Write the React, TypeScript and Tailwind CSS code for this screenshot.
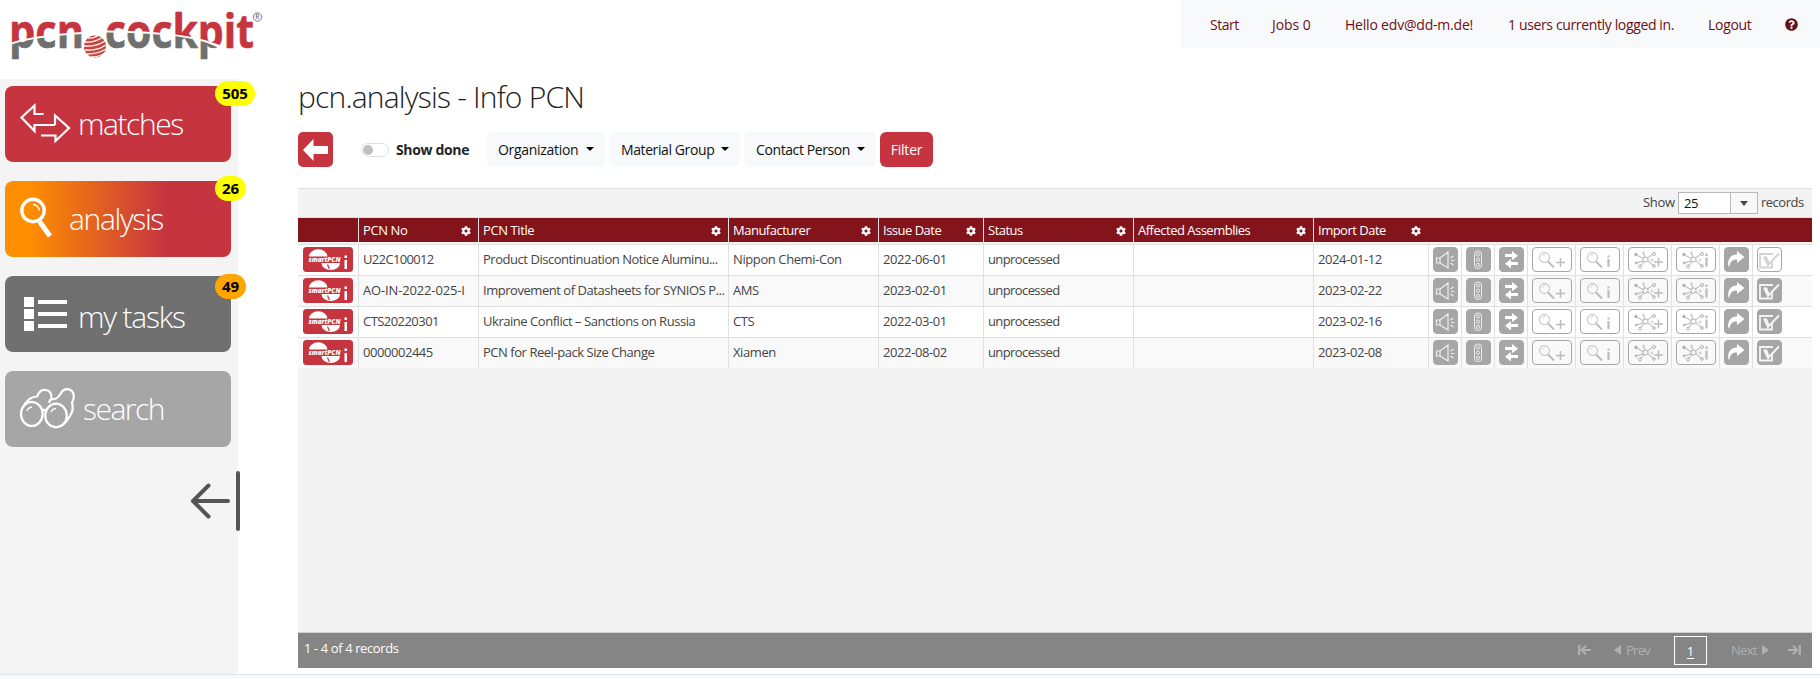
import type { ReactNode } from "react";
import { FaCog, FaQuestionCircle } from "react-icons/fa";
import clsx from "clsx";

const records = [
  { no: "U22C100012", noClass: "tracking-[-0.65px]", title: "Product Discontinuation Notice Aluminu...", maker: "Nippon Chemi-Con", issued: "2022-06-01", imported: "2024-01-12", done: false },
  { no: "AO-IN-2022-025-I", noClass: "tracking-[-0.15px]", title: "Improvement of Datasheets for SYNIOS P...", maker: "AMS", issued: "2023-02-01", imported: "2023-02-22", done: true },
  { no: "CTS20220301", noClass: "tracking-[-0.55px]", title: "Ukraine Conflict – Sanctions on Russia", maker: "CTS", issued: "2022-03-01", imported: "2023-02-16", done: true },
  { no: "0000002445", noClass: "tracking-[-0.45px]", title: "PCN for Reel-pack Size Change", maker: "Xiamen", issued: "2022-08-02", imported: "2023-02-08", done: true },
];

const headers = [
  { label: "PCN No", width: "w-[120px]", text: "tracking-[-0.4px]" },
  { label: "PCN Title", width: "w-[250px]", text: "tracking-[-0.4px]" },
  { label: "Manufacturer", width: "w-[150px]", text: "tracking-[-0.5px]" },
  { label: "Issue Date", width: "w-[105px]", text: "tracking-[-0.5px]" },
  { label: "Status", width: "w-[150px]", text: "tracking-[-0.5px]" },
  { label: "Affected Assemblies", width: "w-[180px]", text: "tracking-[-0.5px]" },
  { label: "Import Date", width: "w-[115px]", text: "tracking-[-0.5px]" },
];

function Logo() {
  return (
    <svg width="270" height="79" viewBox="0 0 270 79" className="block shrink-0" fontFamily="Open Sans, sans-serif">
      <defs>
        <pattern id="twoTone" patternUnits="userSpaceOnUse" width="270" height="79">
          <path d="M0 0H270V79H228V49C212 40 180 31 107 30.500V0H90V31.500C60 33 30 36 10 43H0Z" fill="#c6343f" />
          <path d="M0 46L10 45C30 38 60 35 90 33.500V79H0ZM104 32.500C180 33 205 40 223 50V79H104Z" fill="#6f6f6e" />
        </pattern>
      </defs>
      <g fill="url(#twoTone)" stroke="url(#twoTone)" strokeWidth=".6" fontSize="47" fontWeight="700">
        <text x="9" y="47.500" textLength="75" lengthAdjust="spacingAndGlyphs">pcn</text>
        <text x="105" y="47.500" textLength="149" lengthAdjust="spacingAndGlyphs">cockpit</text>
      </g>
      <circle cx="95" cy="46.500" r="11" fill="#c9453f" />
      <g fill="none" stroke="#fff" strokeWidth="1.300">
        <path d="M85 42Q94 43 103 37M84 46Q96 47 105 41M85 50Q97 51 106 45M87 54Q98 54 106 49M91 57Q99 57 105 53M88 38Q93 39 98 35.500" />
      </g>
      <g fill="none" stroke="#6f6f6e">
        <circle cx="257.500" cy="17" r="4.200" strokeWidth=".9" />
      </g>
      <text x="255.200" y="19.300" fontSize="6.500" fontWeight="600" fill="#6f6f6e">R</text>
    </svg>
  );
}

function TopNav() {
  return (
    <nav className="flex h-12 w-[639px] items-center bg-[#f8f9fb] pl-[29px] text-[14px] whitespace-nowrap text-[#6b1018]">
      <span className="w-[62px] tracking-[-0.5px]">Start</span>
      <span className="w-[73px] tracking-[-0.05px]">Jobs 0</span>
      <span className="w-[163px] tracking-[-0.2px]">Hello edv@dd-m.de!</span>
      <span className="w-[200px] tracking-[-0.36px]">1 users currently logged in.</span>
      <span className="w-[77px] tracking-[-0.3px]">Logout</span>
      <FaQuestionCircle size={13} />
    </nav>
  );
}

interface MenuButtonProps {
  label: string;
  count?: string;
  className: string;
  textClass: string;
  badgeClass?: string;
  children: ReactNode;
}

function MenuButton({ label, count, className, textClass, badgeClass, children }: MenuButtonProps) {
  return (
    <button className={clsx("relative flex h-[76px] w-[226px] items-start rounded-lg text-left text-white", className)}>
      {children}
      <span className={clsx("text-[30px] leading-[40px] font-light whitespace-nowrap", textClass)}>{label}</span>
      {count && (
        <span
          className={clsx(
            "absolute left-[210px] flex h-[25px] items-center justify-center rounded-full text-[15px] font-bold text-black",
            badgeClass
          )}
        >
          {count}
        </span>
      )}
    </button>
  );
}

function Sidebar() {
  return (
    <aside className="h-[595px] w-[238px] shrink-0 bg-[#f4f4f4] pt-[7px] pl-[5px]">
      <div className="flex flex-col gap-[19px]">
        <MenuButton label="matches" count="505" className="bg-[#c6343f]" textClass="ml-[3px] mt-[18px] tracking-[-1.45px]" badgeClass="-top-[5px] w-10 bg-[#ffff00]">
          <svg width="70" height="76" viewBox="5 86 70 76">
            <path
              d="M43.500 114H34.500V105.500L21.500 117.500L34.500 131V125H55M41 135.500H55.500V141L69 128L55 115.500V125"
              fill="none"
              stroke="#fff"
              strokeWidth="2.200"
            />
          </svg>
        </MenuButton>
        <MenuButton
          label="analysis"
          count="26"
          className="bg-[linear-gradient(90deg,#ff8f00_10%,#c6343f_71%)]"
          textClass="ml-px mt-[18px] tracking-[-1.35px]"
          badgeClass="-top-[5px] w-[31px] bg-[#ffff00]"
        >
          <svg width="63" height="76" viewBox="5 181 63 76" fill="none" stroke="#fff">
            <circle cx="33" cy="210.500" r="11.200" strokeWidth="3.400" />
            <path d="M33 204.500Q38 205 39.500 210.500" strokeWidth="1.500" />
            <path d="M39.500 221.500L50 236" strokeWidth="5" />
          </svg>
        </MenuButton>
        <MenuButton label="my tasks" count="49" className="bg-[#707070]" textClass="ml-[2px] mt-[21px] tracking-[-1.2px]" badgeClass="-top-[2px] w-[31px] bg-[#ffa500]">
          <svg width="71" height="76" viewBox="5 276 71 76" fill="#fff">
            <path d="M24 297h10v10H24zM24 309h10v10H24zM24 321h10v10H24zM38 300h29v4H38zM38 312h29v4H38zM38 324h29v4H38z" />
          </svg>
        </MenuButton>
        <MenuButton label="search" className="bg-[#a6a6a6]" textClass="ml-[3px] mt-[18px] tracking-[-1.5px]">
          <svg width="75" height="76" viewBox="5 371 75 76" fill="none" stroke="#fff" strokeWidth="2.200">
            <ellipse cx="31.800" cy="414" rx="10.800" ry="12" />
            <ellipse cx="56" cy="415.500" rx="10.800" ry="11.800" />
            <path d="M24 405C28 400 31 396.500 37 396.500C39 392 42 389.500 45 390C50 390 52 394 51.500 399.500C57 399 59 397 61 393C64 388 69 388.500 72 391C75 395 74 399 72 403C74 409 72 413 70 416C67 421 65 424 61 426M51.500 399.500Q49 400 49.500 403M42 411Q44 409 46.500 411" />
            <path d="M27 411Q28 407.500 32 407M51 412Q52 409 56 408.500" strokeWidth="1.300" />
          </svg>
        </MenuButton>
      </div>
      <svg width="52" height="64" viewBox="189 469 52 64" className="mt-[22px] ml-[184px]" fill="none" stroke="#555" strokeWidth="4" strokeLinecap="round" strokeLinejoin="round">
        <path d="M228 501H193L208.500 485.500M193 501L208.500 516.500M238 473V529" />
      </svg>
    </aside>
  );
}

function Dropdown({ label, className }: { label: string; className: string }) {
  return (
    <button className={clsx("flex h-[35px] items-center justify-between rounded-md bg-[#f8f9fb] pr-[11px] text-[14px] whitespace-nowrap text-[#111]", className)}>
      {label}
      <span className="mb-[2px] border-x-4 border-t-4 border-x-transparent border-t-black" />
    </button>
  );
}

function Toolbar() {
  return (
    <div className="mt-[17px] flex h-[35px] items-center">
      <button className="flex size-[35px] items-center justify-center rounded-[5px] bg-[#c6343f]">
        <svg width="25" height="22" viewBox="0 0 25 22" fill="#fff">
          <path d="M0 11L10.500 0V7H25V15H10.500V22Z" />
        </svg>
      </button>
      <span className="ml-7 flex h-[14px] w-7 items-center rounded-full border border-[#dee2e6] bg-white pl-[1px]">
        <span className="size-[10px] rounded-full bg-[#bfbfbf]" />
      </span>
      <span className="ml-[7px] w-[91px] text-[14px] font-bold tracking-[-0.35px] whitespace-nowrap text-[#212529]">Show done</span>
      <div className="flex gap-1">
        <Dropdown label="Organization" className="w-[118px] pl-[11px] tracking-[-0.3px]" />
        <Dropdown label="Material Group" className="w-[131px] pl-3 tracking-[-0.4px]" />
        <Dropdown label="Contact Person" className="w-[132px] pl-3 tracking-[-0.4px]" />
        <button className="h-[35px] w-[53px] rounded-md bg-[#c6343f] text-[14px] tracking-[-0.2px] text-white">Filter</button>
      </div>
    </div>
  );
}

function SmartPcnBadge() {
  return (
    <svg width="50" height="25" viewBox="0 0 50 25" fontFamily="Open Sans, sans-serif">
      <rect width="50" height="25" rx="3.500" fill="#c6343f" />
      <path d="M6 9.500A9.200 7.200 0 0 1 24.400 9.500ZM18.500 16H37A9.200 7 0 0 1 18.500 16Z" fill="#fff" />
      <path d="M24.500 17.500L26.500 22" stroke="#c6343f" strokeWidth="1.200" />
      <text x="5.500" y="15.200" fontSize="6.500" fontWeight="800" fontStyle="italic" fill="#fff" textLength="32" lengthAdjust="spacingAndGlyphs">smartPCN</text>
      <path d="M41.500 8.500h2.500v2.500h-2.500zM41.500 13h2.500v9h-2.500z" fill="#fff" />
    </svg>
  );
}

function ActionCell({ wide, filled, last, children }: { wide?: boolean; filled?: boolean; last?: boolean; children: ReactNode }) {
  return (
    <div className={clsx("flex h-[30px] shrink-0 items-start border-l border-[#e0e0e0] pt-[2px] pl-1", last ? "w-[60px]" : wide ? "w-12" : "w-[33px]")}>
      <span
        className={clsx(
          "flex h-[25px] shrink-0 items-center justify-center rounded-[4px] border border-[#a6a6a6]",
          wide ? "w-10" : "w-[25px]",
          filled && "bg-[#a6a6a6]"
        )}
      >
        <svg width={wide ? 38 : 23} height="23" viewBox={wide ? "1 1 38 23" : "1 1 23 23"} fill="none" stroke={filled ? "#fff" : "#bcbcbc"}>
          {children}
        </svg>
      </span>
    </div>
  );
}

const magnifier = (
  <>
    <circle cx="12.500" cy="10.500" r="5" />
    <path d="M10.500 9.500Q11 7.500 13 7.500" strokeWidth=".7" />
    <path d="M16 14.500L22 20.500" strokeWidth="1.800" />
  </>
);

const network = (
  <g stroke="#b0b0b0">
    <circle cx="17.500" cy="12.500" r="2.600" />
    <path d="M15 11.500L9.500 8.500M15 14L8 16M19.500 11L25 7M16 15L12.500 18.500M20 14L25 18M17 10L15.500 7" />
    <circle cx="8" cy="7.500" r="1.300" fill="#b0b0b0" />
    <circle cx="8" cy="16" r="1" />
    <circle cx="26" cy="7" r="1.500" />
    <circle cx="12" cy="19.500" r="1.500" />
    <circle cx="26" cy="19" r="1.300" />
    <path d="M15.500 4.500v3M14 6h3M24 11.500v3M22.500 13h3" strokeWidth=".6" />
  </g>
);

const plus = <path d="M28.500 11V20M24 15.500H33" strokeWidth="1.500" />;
const info = <path d="M28.500 8.500V10.500M28.500 12V20" strokeWidth="2.200" />;
const networkPlus = <path d="M30.500 10.500V19.500M26 15H35" strokeWidth="1.500" />;
const networkInfo = <path d="M30.500 6.500V9M30.500 10.500V19.500" strokeWidth="2.200" />;

function RowActions({ done }: { done: boolean }) {
  return (
    <>
      <ActionCell filled>
        <path d="M3.500 11H7V16H3.500ZM7 11L15 5V21L7 16M17.500 11L20.500 9M18 13.500H21.500M17.500 16L20.500 18" stroke="#eee" strokeWidth="1.200" />
      </ActionCell>
      <ActionCell filled>
        <rect x="8.500" y="4" width="7" height="17.500" rx="3.200" stroke="#eee" />
        <circle cx="12" cy="7.500" r="1.600" stroke="#eee" />
        <circle cx="12" cy="12.700" r="1.600" stroke="#eee" />
        <circle cx="12" cy="17.900" r="1.600" stroke="#eee" />
      </ActionCell>
      <ActionCell filled>
        <path d="M6 7h7V4l6 4.700-6 4.500V10H6ZM19 15h-7v-3l-6 4.700 6 4.800V18h7Z" fill="#fff" stroke="none" />
      </ActionCell>
      <ActionCell wide>{magnifier}{plus}</ActionCell>
      <ActionCell wide>{magnifier}{info}</ActionCell>
      <ActionCell wide>{network}{networkPlus}</ActionCell>
      <ActionCell wide>{network}{networkInfo}</ActionCell>
      <ActionCell filled>
        <path d="M4.500 19.500C3 12 7 7.500 13 7.500V4L20.500 10L13 16V12.500C9 12 6 14 5.500 19.500Z" fill="#fff" stroke="none" />
      </ActionCell>
      <ActionCell last filled={done}>
        <g stroke={done ? "#f4f4f4" : "#d4d4d4"} strokeWidth="1.800">
          <path d="M16 7H3V20.500H15V14" />
          <path d="M7 9.500L11 18L22 6.500M9 9.500L11.500 16" strokeWidth="2" />
        </g>
      </ActionCell>
    </>
  );
}

function Cell({ className, children }: { className: string; children?: ReactNode }) {
  return <div className={clsx("h-[30px] shrink-0 border-l border-[#e0e0e0] pl-1 leading-[29px] whitespace-nowrap", className)}>{children}</div>;
}

function Grid() {
  return (
    <section className="mt-[21px] flex h-[480px] w-[1514px] flex-col border-t border-[#dfdfdf] bg-[#f3f3f3] text-[13px]">
      <div className="flex h-7 items-center justify-end pr-[9px] text-[#444]">
        <span className="w-[35px] tracking-[-0.3px]">Show</span>
        <span className="flex h-[22px] w-20 border border-[#b8b8b8] bg-white leading-5 text-[#111]">
          <span className="w-[52px] border-r border-[#b8b8b8] pl-[5px] tracking-[-0.4px]">25</span>
          <span className="flex flex-1 items-center justify-center bg-[#f8f8f8]">
            <span className="border-x-4 border-t-5 border-x-transparent border-t-[#444]" />
          </span>
        </span>
        <span className="ml-[3px] w-[42px] tracking-[-0.5px]">records</span>
      </div>
      <div className="flex h-[25px] border-t border-[#dfdfdf] bg-[#84141b] text-white">
        <div className="w-[60px]" />
        {headers.map((h) => (
          <div
            key={h.label}
            className={clsx("flex items-center justify-between border-l border-[#e8e0e0] pt-px pr-[7px] pl-1 whitespace-nowrap", h.width, h.text)}
          >
            {h.label}
            <FaCog size={10} />
          </div>
        ))}
      </div>
      <div className="mt-[2px] text-[#444]">
        {records.map((r, i) => (
          <div key={r.no} className={clsx("flex h-[31px] border-t border-[#e0e0e0]", i % 2 ? "bg-[#f9f9f9]" : "bg-white")}>
            <div className="w-[60px] shrink-0 pt-[2px] pl-[5px]">
              <SmartPcnBadge />
            </div>
            <Cell className={clsx("w-[120px]", r.noClass)}>{r.no}</Cell>
            <Cell className="w-[250px] tracking-[-0.46px]">{r.title}</Cell>
            <Cell className="w-[150px] tracking-[-0.4px]">{r.maker}</Cell>
            <Cell className="w-[105px] tracking-[-0.4px]">{r.issued}</Cell>
            <Cell className="w-[150px] tracking-[-0.6px]">unprocessed</Cell>
            <Cell className="w-[180px]" />
            <Cell className="w-[115px] tracking-[-0.4px]">{r.imported}</Cell>
            <RowActions done={r.done} />
          </div>
        ))}
      </div>
      <footer className="mt-auto flex h-9 items-start border-t border-[#cfcfcf] bg-[#858585] pl-[6px] text-white">
        <span className="mt-[6px] w-[1274px] tracking-[-0.4px]">1 - 4 of 4 records</span>
        <div className="flex h-full text-[#b0b0b0]">
          <svg width="13" height="10" viewBox="0 0 13 10" className="mt-3" stroke="currentColor" strokeWidth="2.200" fill="none">
            <path d="M1.200 0V10M13 5H4M8 .8L3.800 5L8 9.200" />
          </svg>
          <svg width="7" height="10" viewBox="0 0 7 10" className="mt-3 ml-[23px]" fill="currentColor">
            <path d="M7 0V10L0 5Z" />
          </svg>
          <span className="mt-2 ml-[5px] w-12 tracking-[-0.7px]">Prev</span>
          <span className="mt-[3px] h-[29px] w-[33px] border border-white text-center leading-[29px] text-white underline underline-offset-2">1</span>
          <span className="mt-2 ml-6 w-[31px] tracking-[-0.7px]">Next</span>
          <svg width="7" height="10" viewBox="0 0 7 10" className="mt-3" fill="currentColor">
            <path d="M0 0V10L7 5Z" />
          </svg>
          <svg width="13" height="10" viewBox="0 0 13 10" className="mt-3 ml-[19px]" stroke="currentColor" strokeWidth="2.200" fill="none">
            <path d="M11.800 0V10M0 5H9M5 .8L9.200 5L5 9.200" />
          </svg>
        </div>
      </footer>
    </section>
  );
}

export default function App() {
  return (
    <div className="h-[679px] w-[1820px] overflow-hidden bg-white font-['Open_Sans',sans-serif]">
      <header className="flex h-[79px] items-start justify-between">
        <Logo />
        <TopNav />
      </header>
      <div className="flex h-[595px]">
        <Sidebar />
        <main className="ml-[60px]">
          <h1 className="h-9 text-[30px] leading-9 font-[350] tracking-[-0.8px] text-[#222]">pcn.analysis - Info PCN</h1>
          <Toolbar />
          <Grid />
        </main>
      </div>
      <div className="h-[5px] border-t border-[#dee2e6] bg-[#f8f9fb]" />
    </div>
  );
}
